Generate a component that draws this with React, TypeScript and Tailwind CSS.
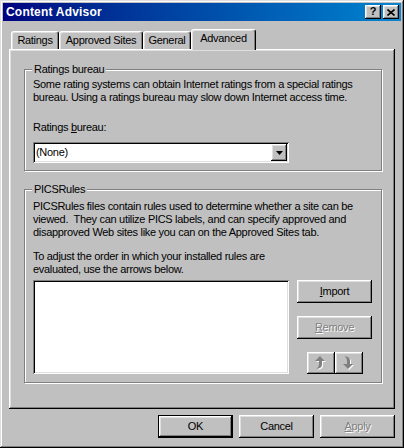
import type { ReactNode } from "react";

const raised =
  "shadow-[inset_-1px_-1px_#000000,inset_1px_1px_#ffffff,inset_-2px_-2px_#808080,inset_2px_2px_#dfdfdf]";
const sunken =
  "shadow-[inset_1px_1px_#808080,inset_-1px_-1px_#ffffff,inset_2px_2px_#000000,inset_-2px_-2px_#dfdfdf]";
const disabled = "text-[#808080] [text-shadow:1px_1px_0_#ffffff]";

function Button({
  children,
  w = "w-[75px]",
  h = "h-[23px]",
  isDefault = false,
  off = false,
}: {
  children: ReactNode;
  w?: string;
  h?: string;
  isDefault?: boolean;
  off?: boolean;
}) {
  if (isDefault) {
    return (
      <div className={`${w} ${h} bg-black p-[1px]`}>
        <div className={`w-full h-full bg-[#c0c0c0] flex items-center justify-center ${raised}`}>{children}</div>
      </div>
    );
  }
  return (
    <div className={`${w} ${h} bg-[#c0c0c0] flex items-center justify-center ${raised} ${off ? disabled : ""}`}>
      {children}
    </div>
  );
}

function GroupBox({ label, className, children }: { label: string; className: string; children: ReactNode }) {
  return (
    <div className={`relative border border-[#808080] shadow-[inset_1px_1px_#ffffff,1px_1px_#ffffff] ${className}`}>
      <span className="absolute left-[7px] top-[-7px] px-[2px] bg-[#c0c0c0] leading-[13px]">{label}</span>
      {children}
    </div>
  );
}

function Tab({ label, w, active = false }: { label: string; w: string; active?: boolean }) {
  return (
    <div
      className={`${w} ${active ? "h-[21px] -mb-[1px] relative z-10 pb-[3px]" : "h-[18px]"} bg-[#c0c0c0] border-t border-l border-white border-r border-r-black rounded-t-[3px] shadow-[inset_-1px_0_#808080,inset_1px_1px_#dfdfdf] flex items-center justify-center`}
    >
      {label}
    </div>
  );
}

// greyed "move up / move down" arrows with a hooked stem
function ArrowIcon({ down = false }: { down?: boolean }) {
  const up = "M5 0 L10 5 L7 5 L7 8.5 Q7 12 3 12.5 L1.5 12.5 Q4 11 4 8.5 L4 5 L0 5 Z";
  const dn = "M5 13 L10 8 L7 8 L7 4.5 Q7 1 3 0.5 L1.5 0.5 Q4 2 4 4.5 L4 8 L0 8 Z";
  const d = down ? dn : up;
  return (
    <svg width="12" height="15" viewBox="0 0 12 15">
      <path d={d} fill="#ffffff" transform="translate(1 1)" />
      <path d={d} fill="#808080" />
    </svg>
  );
}

export default function App() {
  return (
    <div
      className={`w-[404px] h-[448px] bg-[#c0c0c0] p-[3px] flex flex-col text-black text-[11px] leading-[13px] tracking-[-0.3px] whitespace-nowrap font-['Liberation_Sans',Arial,sans-serif] shadow-[inset_-1px_-1px_#000000,inset_1px_1px_#dfdfdf,inset_-2px_-2px_#808080,inset_2px_2px_#ffffff]`}
    >
      {/* title bar */}
      <div className="h-[18px] bg-linear-to-r from-[#000080] to-[#1084d0] flex items-center pl-[3px] pr-[2px]">
        <span className="text-white font-bold text-[12px] tracking-[0.2px] flex-1">Content Advisor</span>
        <div className={`w-[16px] h-[14px] bg-[#c0c0c0] ${raised} flex items-center justify-center font-bold text-[11px] leading-none pb-[1px]`}>
          ?
        </div>
        <div className={`ml-[2px] w-[16px] h-[14px] bg-[#c0c0c0] ${raised} flex items-center justify-center`}>
          <svg width="8" height="7" viewBox="0 0 8 7">
            <path d="M0.5 0.5 L7.5 6.5 M7.5 0.5 L0.5 6.5" stroke="#000" strokeWidth="1.6" />
          </svg>
        </div>
      </div>

      {/* tabs */}
      <div className="mt-[8px] mx-[6px] h-[20px] flex items-end pl-[2px]">
        <Tab label="Ratings" w="w-[48px]" />
        <Tab label="Approved Sites" w="w-[84px]" />
        <Tab label="General" w="w-[48px]" />
        <Tab label="Advanced" w="w-[65px]" active />
      </div>

      {/* panel */}
      <div className={`mx-[6px] h-[360px] pl-[15px] pt-[20px] ${raised}`}>
        <GroupBox label="Ratings bureau" className="w-[358px] h-[102px] pt-[8px] px-[8px]">
          <p>Some rating systems can obtain Internet ratings from a special ratings</p>
          <p>bureau. Using a ratings bureau may slow down Internet access time.</p>
          <p className="mt-[17px]">
            Ratings <u>b</u>ureau:
          </p>
          <div className={`mt-[8px] w-[256px] h-[21px] bg-white ${sunken} flex items-center pl-[3px] pr-[2px]`}>
            <span className="flex-1">(None)</span>
            <div className={`w-[16px] h-[17px] bg-[#c0c0c0] ${raised} flex items-center justify-center`}>
              <svg width="7" height="4" viewBox="0 0 7 4">
                <path d="M0 0 H7 L3.5 4 Z" fill="#000" />
              </svg>
            </div>
          </div>
        </GroupBox>

        <GroupBox label="PICSRules" className="mt-[18px] w-[358px] h-[194px] pt-[10px] px-[8px]">
          <p>PICSRules files contain rules used to determine whether a site can be</p>
          <p>viewed.&nbsp; They can utilize PICS labels, and can specify approved and</p>
          <p>disapproved Web sites like you can on the Approved Sites tab.</p>
          <p className="mt-[11px]">To adjust the order in which your installed rules are</p>
          <p>evaluated, use the arrows below.</p>
          <div className="mt-[4px] flex gap-[8px]">
            <div className={`w-[256px] h-[94px] bg-white ${sunken}`} />
            <div className="w-[75px] flex flex-col items-center gap-[13px]">
              <Button>
                <span>
                  <u>I</u>mport
                </span>
              </Button>
              <Button off>
                <span>
                  <u>R</u>emove
                </span>
              </Button>
              <div className="flex">
                <Button w="w-[28px]" h="h-[22px]">
                  <ArrowIcon />
                </Button>
                <Button w="w-[28px]" h="h-[22px]">
                  <ArrowIcon down />
                </Button>
              </div>
            </div>
          </div>
        </GroupBox>
      </div>

      {/* buttons */}
      <div className="mt-[6px] mr-[6px] flex justify-end gap-[6px]">
        <Button isDefault>OK</Button>
        <Button>Cancel</Button>
        <Button off>
          <span>
            <u>A</u>pply
          </span>
        </Button>
      </div>
    </div>
  );
}
